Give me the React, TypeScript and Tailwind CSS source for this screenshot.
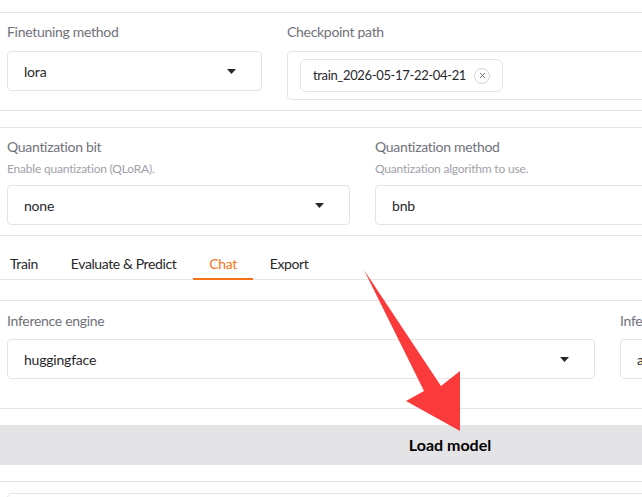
import { X } from 'lucide-react';

const font = { fontFamily: 'Lato, "Noto Sans", sans-serif' };

const Caret = () => (
  <svg width="9" height="5" viewBox="0 0 9 5" className="shrink-0">
    <path d="M0 0h9L4.5 5z" fill="#27272a" />
  </svg>
);

const Label = ({ children }: { children: React.ReactNode }) => (
  <div className="h-5 text-[14px] leading-5 tracking-[-0.3px] text-[#71717a]">{children}</div>
);

const Info = ({ children }: { children: React.ReactNode }) => (
  <div className="mt-[2px] h-5 text-[12px] leading-5 tracking-[-0.2px] text-[#a1a1aa]">{children}</div>
);

const Dropdown = ({ value, caret = true }: { value: string; caret?: boolean }) => (
  <div className="flex h-10 items-center justify-between rounded-[4px] border border-[#e4e4e7] bg-white pl-4 pr-[25px] text-[14px] tracking-[-0.2px] text-[#27272a]">
    <span>{value}</span>
    {caret && <Caret />}
  </div>
);

const tabs = ['Train', 'Evaluate & Predict', 'Chat', 'Export'];

export default function App() {
  return (
    <div className="relative h-[497px] w-[642px] overflow-hidden bg-white" style={font}>
      <div className="w-[900px] pt-[12px]">
        {/* finetuning method / checkpoint */}
        <div className="flex items-start gap-[25px] border-y border-[#e4e4e7] pb-[10px] pl-[7px] pt-[9px]">
          <div className="w-[255px]">
            <div className="mb-[9px]">
              <Label>Finetuning method</Label>
            </div>
            <Dropdown value="lora" />
          </div>
          <div className="flex-1">
            <div className="mb-[9px]">
              <Label>Checkpoint path</Label>
            </div>
            <div className="flex h-[49px] items-center rounded-[4px] border border-[#e4e4e7] bg-white px-3">
              <div className="flex h-[33px] items-center gap-2 rounded-[6px] border border-[#e4e4e7] pl-3 pr-3 text-[13px] tracking-[-0.35px] text-[#27272a]">
                <span>train_2026-05-17-22-04-21</span>
                <span className="flex h-4 w-4 items-center justify-center rounded-full border border-[#d4d4d8] text-[#52525b]">
                  <X size={9} strokeWidth={2.2} />
                </span>
              </div>
            </div>
          </div>
        </div>

        {/* quantization */}
        <div className="mt-[16px] flex items-start gap-[25px] border-y border-[#e4e4e7] pb-[10px] pl-[7px] pt-[9px]">
          <div className="w-[343px]">
            <Label>Quantization bit</Label>
            <Info>Enable quantization (QLoRA).</Info>
            <div className="mt-[6px]">
              <Dropdown value="none" />
            </div>
          </div>
          <div className="w-[343px]">
            <Label>Quantization method</Label>
            <Info>Quantization algorithm to use.</Info>
            <div className="mt-[6px]">
              <Dropdown value="bnb" />
            </div>
          </div>
        </div>

        {/* tabs */}
        <div className="mt-[9px] flex border-b border-[#e4e4e7]">
          <div className="-ml-[6.5px] flex">
            {tabs.map((t) => (
              <div
                key={t}
                className={`relative flex h-[34px] items-center px-[16.5px] pt-[2px] text-[14px] tracking-[-0.4px] ${
                  t === 'Chat' ? 'text-[#f97316]' : 'text-[#27272a]'
                }`}
              >
                {t}
                {t === 'Chat' && <div className="absolute bottom-[-1px] left-0 right-0 h-[2px] bg-[#f97316]" />}
              </div>
            ))}
          </div>
        </div>

        {/* chat panel */}
        <div className="mt-[20px] flex items-start gap-[25px] border-y border-[#e4e4e7] pb-[29px] pl-[7px] pt-[10px]">
          <div className="w-[588px]">
            <div className="mb-[8px]">
              <Label>Inference engine</Label>
            </div>
            <Dropdown value="huggingface" />
          </div>
          <div className="w-[250px]">
            <div className="mb-[8px]">
              <Label>Inference dtype</Label>
            </div>
            <Dropdown value="auto" />
          </div>
        </div>

        <button className="mt-[16px] flex h-10 w-full items-center justify-center bg-[#e4e4e7] text-[16px] font-bold text-black">
          Load model
        </button>

        <div className="mt-[16px] border-t border-[#e4e4e7] pl-[7px] pt-[11px]">
          <div className="h-20 rounded-[4px] border border-[#e4e4e7]" />
        </div>
      </div>

      {/* red annotation arrow */}
      <svg className="pointer-events-none absolute left-0 top-0" width="642" height="497">
        <polygon points="364,270 441,386 460,371 460,431 406,401 424,391" fill="#fb3b3b" />
      </svg>
    </div>
  );
}
